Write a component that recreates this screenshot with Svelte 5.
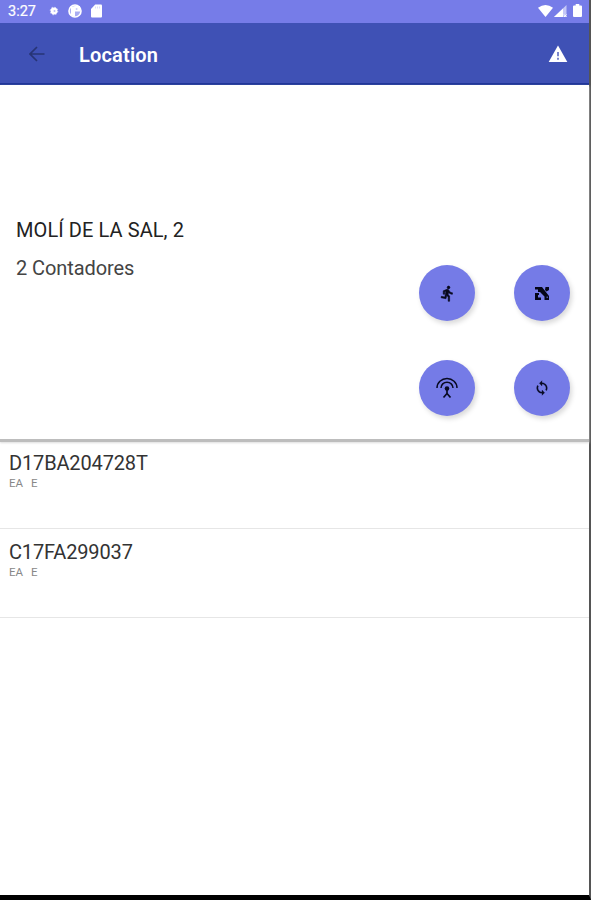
<script>
  const meters = [
    { serial: 'D17BA204728T', tags: ['EA', 'E'] },
    { serial: 'C17FA299037', tags: ['EA', 'E'] }
  ];
  const actions = ['run', 'pattern', 'antenna', 'sync'];
</script>

<div class="device">
  <header class="status">
    <span class="time">3:27</span>
    <svg class="gear" width="10" height="10" viewBox="0 0 10 10">
      <circle cx="5" cy="5" r="3.4" fill="#fff" />
      <circle cx="5" cy="5" r="3.7" fill="none" stroke="#fff" stroke-opacity=".6" stroke-width="1.2" stroke-dasharray="1.5 1.4" />
      <circle cx="5.5" cy="5" r="1" fill="#b9bcf3" />
    </svg>
    <svg class="app" width="14" height="14" viewBox="0 0 14 14">
      <circle cx="7" cy="7" r="6" fill="#a9adf2" stroke="#fff" stroke-width="1.6" />
      <path d="M3 3l4-1v10.500H5.500L3 11z" fill="#fff" />
      <path d="M7 2h5v5.500H7z" fill="#fff" />
      <path d="M7.800 4.300h1.600v1.400H7.800z" fill="#b9bcf5" />
    </svg>
    <svg class="card" width="11" height="14" viewBox="0 0 11 14">
      <path d="M4.2.5H10q1 0 1 1v11q0 1-1 1H1q-1 0-1-1V5z" fill="#fff" />
      <path d="M4.5 2.5v2M6.5 2.5v2M8.500 2.500v2" stroke="#d3d5fa" stroke-width=".8" />
    </svg>
    <span class="grow"></span>
    <svg width="15" height="12" viewBox="0 0 15 12"><path d="M0 2.8Q7.5-2.8 15 2.8L7.5 12z" fill="#fff" /></svg>
    <svg class="signal" width="13" height="12" viewBox="0 0 13 12">
      <path d="M0 12L12.5 0v12z" fill="#c5c8f7" />
      <path d="M0 12L9 3.4V12z" fill="#fff" />
      <path d="M10 9.5l2.5 2.5m0-2.500L10 12" stroke="#fff" stroke-width="1" />
    </svg>
    <svg class="battery" width="9" height="14" viewBox="0 0 9 14"><path d="M2.700 0h3.600v1.400H8q1 0 1 1V12q0 1-1 1H1q-1 0-1-1V2.400q0-1 1-1h1.700z" fill="#fff" /></svg>
  </header>

  <nav class="bar">
    <svg class="back" width="16" height="16" viewBox="0 0 16 16"><path d="M15.500 8H1.500M8 1L1 8l7 7" fill="none" stroke="#273475" stroke-width="1.700" /></svg>
    <h1>Location</h1>
    <svg class="warn" width="20" height="18" viewBox="0 0 20 18">
      <path d="M10 0.500L19.300 17H.7z" fill="#fff" />
      <path d="M10 7v4.300M10 12.800v1.900" stroke="#7480ca" stroke-width="1.900" />
    </svg>
  </nav>

  <section class="summary">
    <div class="info">
      <h2>MOLÍ DE LA SAL, 2</h2>
      <p>2 Contadores</p>
    </div>
    <div class="actions">
      {#each actions as action}
        <button aria-label={action}>
          {#if action === 'run'}
            <svg width="17" height="17" viewBox="0 0 24 24"><path fill="#07081b" stroke="#07081b" stroke-width=".8" d="M13.490 5.480c1.100 0 2-.9 2-2s-.9-2-2-2-2 .9-2 2 .9 2 2 2zm-3.600 13.900l1-4.400 2.100 2v6h2v-7.500l-2.100-2 .6-3c1.300 1.500 3.300 2.500 5.500 2.500v-2c-1.900 0-3.500-1-4.300-2.400l-1-1.600c-.4-.6-1-1-1.700-1-.3 0-.5.1-.8.1l-5.200 2.200v4.700h2v-3.400l1.800-.7-1.600 8.100-4.900-1-.4 2 7 1.400z" /></svg>
          {:else if action === 'pattern'}
            <svg width="14" height="13" viewBox="0 0 14 13">
              <path d="M0 0h5v5H3V2.500H0zM0 6h4v2H3v2.500h3V13H0zM5 0h2l7 9v4H9.500V9.500L5 5zM10.500 0H14v3l-2.500 1.500L10 3z" fill="#050617" />
              <path d="M11.500 9.500H13V11h-1.500z" fill="#4a50a5" />
            </svg>
          {:else if action === 'antenna'}
            <svg width="24" height="22" viewBox="0 0 24 22">
              <g fill="none" stroke="#080a22" stroke-width="1.700">
                <path d="M2 11a10 9.500 0 0 1 20 0M6 11a6 5.800 0 0 1 12 0" stroke-width="1.500" />
                <path d="M12 11v6M12 16.500l-3.500 4M12 16.500l3.500 4" />
              </g>
              <circle cx="12" cy="11.500" r="2.300" fill="#080a22" />
            </svg>
          {:else}
            <svg width="16" height="16" viewBox="0 0 24 24"><path fill="#090b25" stroke="#090b25" stroke-width=".4" d="M12 4V1L8 5l4 4V6c3.310 0 6 2.690 6 6 0 1.010-.25 1.970-.7 2.800l1.460 1.460C19.540 15.030 20 13.570 20 12c0-4.420-3.580-8-8-8zm0 14c-3.310 0-6-2.690-6-6 0-1.010.25-1.970.7-2.800L5.240 7.740C4.460 8.970 4 10.430 4 12c0 4.420 3.580 8 8 8v3l4-4-4-4v3z" /></svg>
          {/if}
        </button>
      {/each}
    </div>
  </section>

  <main>
    {#each meters as meter}
      <article>
        <h3>{meter.serial}</h3>
        <div class="tags">{#each meter.tags as tag}<span>{tag}</span>{/each}</div>
      </article>
    {/each}
  </main>
</div>

<style>
  :global(body) { background: #000; }
  .device {
    box-sizing: border-box;
    height: 900px;
    display: flex;
    flex-direction: column;
    border-right: 2px solid #555;
    border-bottom: 5px solid #000;
    background: #fff;
    font-family: Roboto, sans-serif;
    color: #333;
  }
  svg { display: block; flex: none; }
  h1, h2, h3, p { margin: 0; font-weight: 400; }
  .status {
    box-sizing: border-box;
    height: 23px;
    padding: 0 7px 2px 8px;
    display: flex;
    align-items: center;
    background: #767ce8;
    color: #fff;
  }
  .time { width: 41px; font-size: 14.5px; line-height: 20px; padding-top: 3px; -webkit-text-stroke: .2px #fff; }
  .app { margin-left: 9px; }
  .card { margin-left: 9px; }
  .grow { flex: 1; }
  .signal { margin-left: 1px; }
  .battery { margin-left: 6px; }
  .bar {
    box-sizing: border-box;
    height: 62px;
    display: flex;
    align-items: center;
    padding: 0 21px 0 29px;
    background: #3f51b5;
    border-bottom: 2px solid #203698;
  }
  h1 { margin-left: 34px; flex: 1; font-size: 20px; font-weight: 600; letter-spacing: .18px; color: #fff; line-height: 24px; padding-top: 4px; }
  .back, .warn { margin-top: 2px; }
  .summary {
    box-sizing: border-box;
    height: 357px;
    display: flex;
    justify-content: space-between;
    padding: 133px 19px 0 16px;
    border-bottom: 3px solid #bdbdbd;
    box-shadow: 0 1px 2px #ddd;
  }
  h2 { font-size: 20px; line-height: 25px; letter-spacing: .08px; color: #222; white-space: nowrap; }
  .info p { margin-top: 13px; font-size: 20px; line-height: 25px; letter-spacing: -.08px; color: #444; }
  .actions {
    display: grid;
    grid-template-columns: 56px 56px;
    grid-auto-rows: 56px;
    gap: 39px;
    margin-top: 47px;
    align-content: start;
  }
  button {
    display: flex;
    align-items: center;
    justify-content: center;
    padding: 0;
    border: 0;
    border-radius: 50%;
    background: #757be7;
    box-shadow: 2px 3px 5px rgb(0 0 0 / 15%);
  }
  article {
    box-sizing: border-box;
    height: 89px;
    padding: 11px 9px 0;
    border-bottom: 1px solid #e6e6e6;
  }
  article:first-child { height: 87px; padding-top: 9px; }
  h3 { font-size: 20px; line-height: 25px; letter-spacing: -.15px; }
  .tags { display: flex; gap: 8px; font-size: 11.5px; line-height: 15px; color: #888; }
</style>
